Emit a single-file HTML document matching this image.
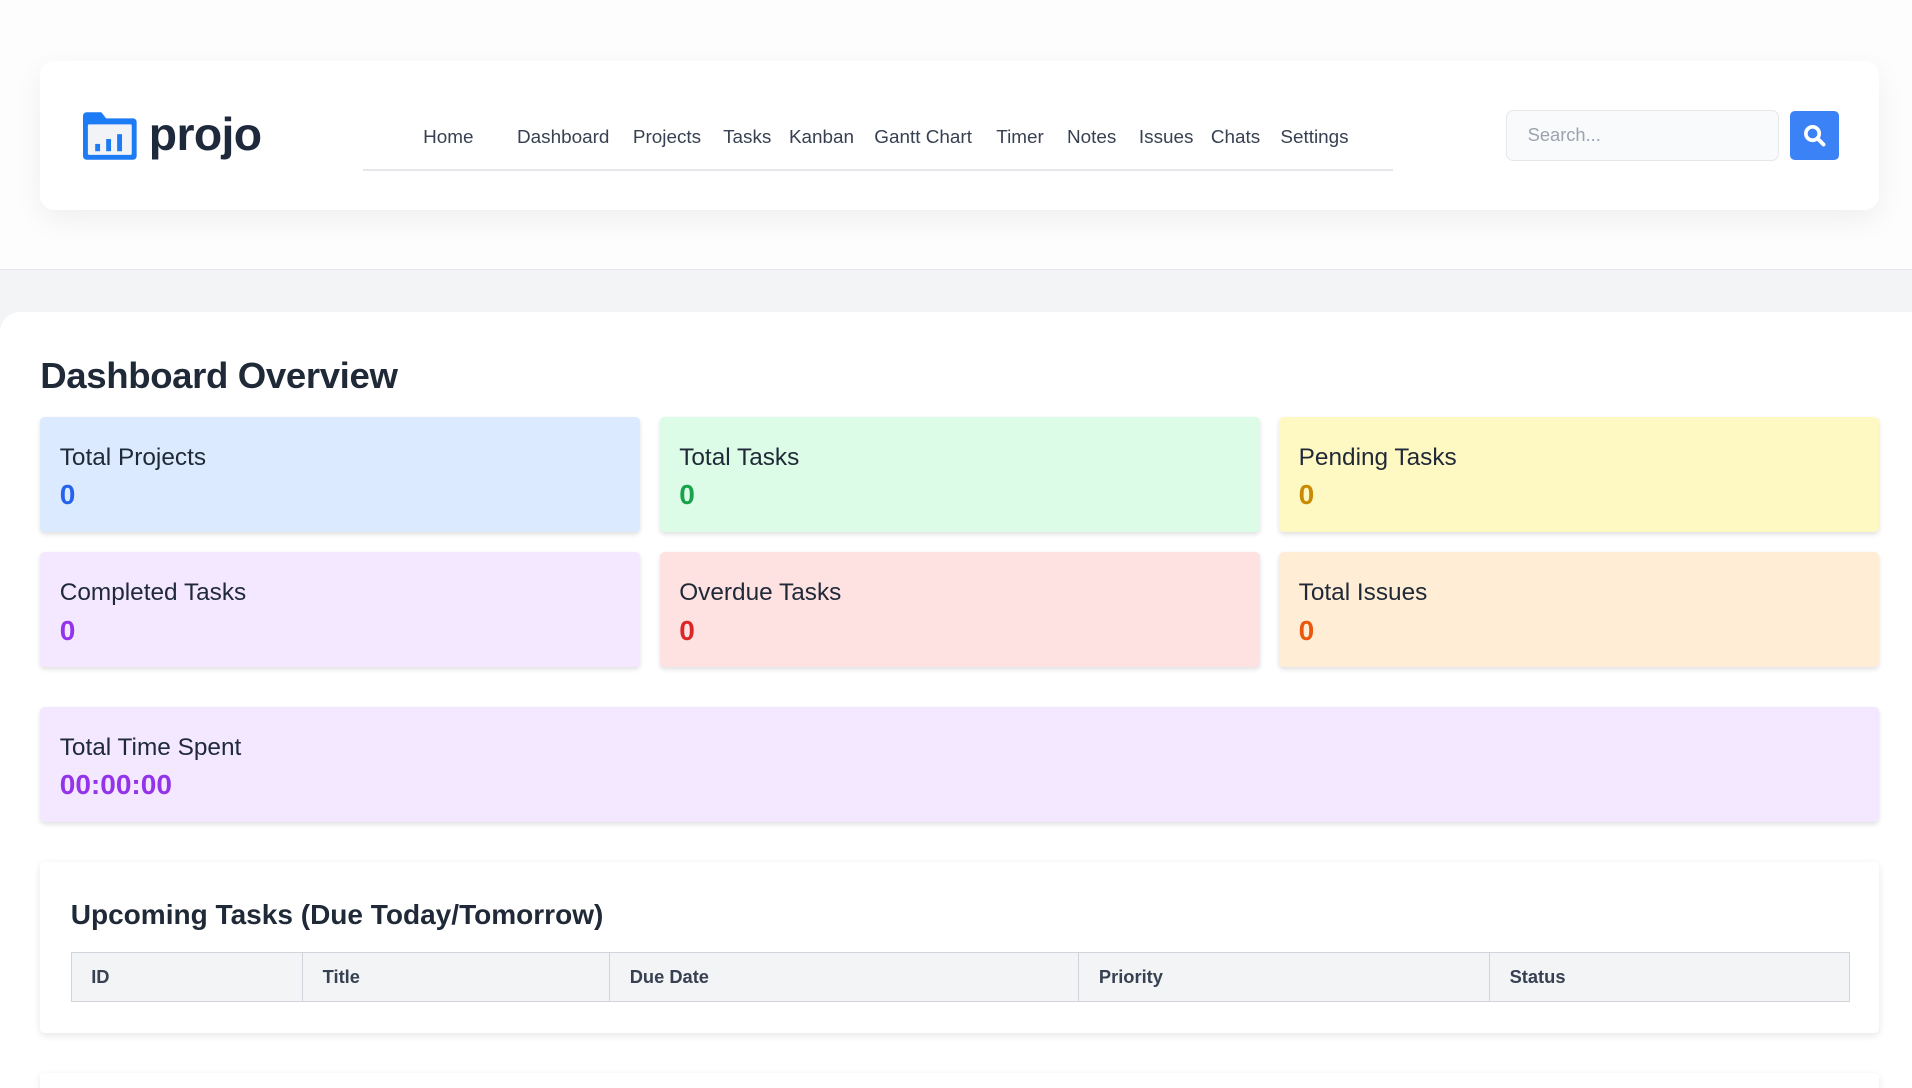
<!DOCTYPE html>
<html><head><meta charset="utf-8">
<style>
html{zoom:1.2194;overflow:hidden;height:892px}
body{margin:0;width:1568px;height:892px;overflow:hidden;background:#f3f4f6;font-family:"Liberation Sans",Arial,sans-serif;color:#1f2937;position:relative}
.top{position:absolute;left:0;top:0;width:1568px;height:221px;background:#fdfdfd;border-bottom:1px solid #e5e7eb}
.hdr{position:absolute;left:33px;top:50px;width:1508px;height:122px;background:#fff;border-radius:12px;box-shadow:0 8px 24px rgba(0,0,0,.06)}
.logo{position:absolute;left:35px;top:41px}
.brand{position:absolute;left:89px;top:38px;font-size:38px;font-weight:bold;color:#1e293b;letter-spacing:-0.5px}
.nav{position:absolute;left:265px;top:48px;width:844px;height:41px;border-bottom:2px solid #e5e7eb;font-size:15.5px;color:#374151}
.nav span{position:absolute;top:6px;white-space:nowrap}
.search{position:absolute;left:1202px;top:40px;background:#f9fafb;border:1px solid #e5e7eb;border-radius:6px;color:#9ca3af;font-size:15px;line-height:40px;padding-left:17px;box-sizing:border-box;width:224px;height:42px}
.btn{position:absolute;left:1435px;top:41px;width:40px;height:40px;background:#3b82f6;border-radius:4px}
.main{position:absolute;left:0;top:256px;width:1568px;height:636px;background:#fff;border-radius:16px 0 0 0;overflow:hidden}
h1{position:absolute;left:33px;top:35px;margin:0;font-size:30px;font-weight:bold;color:#1f2937;letter-spacing:-0.3px}
.c{position:absolute;width:492px;height:94px;border-radius:4px;box-shadow:0 2px 4px rgba(0,0,0,.12)}
.c .l{position:absolute;left:16px;top:22px;font-size:20px;color:#1f2937}
.c .v{position:absolute;left:16px;top:51px;font-size:23px;font-weight:bold}
.tbl{position:absolute;left:33px;top:451px;width:1508px;height:140px;background:#fff;border-radius:4px;box-shadow:0 2px 6px rgba(0,0,0,.1)}
.tbl h2{position:absolute;left:25px;top:30px;margin:0;font-size:23px;font-weight:bold;color:#1f2937}
table{position:absolute;left:25px;top:74px;border-collapse:collapse;width:1459px}
th{background:#f3f4f6;border:1px solid #d1d5db;height:39px;text-align:left;padding:0 16px;font-size:15px;color:#374151}
</style></head><body>
<div class="top">
 <div class="hdr">
  <svg class="logo" width="44" height="40" viewBox="0 0 44 40"><path d="M0 4a3 3 0 0 1 3-3h12l4 5h22a3 3 0 0 1 3 3v28a3 3 0 0 1-3 3H3a3 3 0 0 1-3-3z" fill="#1d7bf5"/><rect x="4" y="11" width="36" height="25" rx="1" fill="#f1f3f6"/><rect x="10" y="27" width="4" height="6" fill="#1d7bf5"/><rect x="19" y="23" width="4" height="10" fill="#1d7bf5"/><rect x="28" y="19" width="4" height="14" fill="#1d7bf5"/></svg>
  <div class="brand">projo</div>
  <div class="nav">
   <span style="left:49px">Home</span><span style="left:126px">Dashboard</span><span style="left:221px">Projects</span><span style="left:295px">Tasks</span><span style="left:349px">Kanban</span><span style="left:419px">Gantt Chart</span><span style="left:519px">Timer</span><span style="left:577px">Notes</span><span style="left:636px">Issues</span><span style="left:695px">Chats</span><span style="left:752px">Settings</span>
  </div>
  <div class="search">Search...</div>
  <div class="btn"><svg width="40" height="40" viewBox="0 0 40 40"><circle cx="18.5" cy="18.5" r="5.5" fill="none" stroke="#fff" stroke-width="3"/><path d="M22.5 22.5l5 5" stroke="#fff" stroke-width="3.2" stroke-linecap="round"/></svg></div>
 </div>
</div>
<div class="main">
 <h1>Dashboard Overview</h1>
 <div class="c" style="left:33px;top:86px;background:#dbeafe"><div class="l">Total Projects</div><div class="v" style="color:#2563eb">0</div></div>
 <div class="c" style="left:541px;top:86px;background:#dcfce7"><div class="l">Total Tasks</div><div class="v" style="color:#16a34a">0</div></div>
 <div class="c" style="left:1049px;top:86px;background:#fef9c3"><div class="l">Pending Tasks</div><div class="v" style="color:#ca8a04">0</div></div>
 <div class="c" style="left:33px;top:197px;background:#f3e8ff"><div class="l">Completed Tasks</div><div class="v" style="color:#9333ea">0</div></div>
 <div class="c" style="left:541px;top:197px;background:#fee2e2"><div class="l">Overdue Tasks</div><div class="v" style="color:#dc2626">0</div></div>
 <div class="c" style="left:1049px;top:197px;background:#ffedd5"><div class="l">Total Issues</div><div class="v" style="color:#ea580c">0</div></div>
 <div class="c" style="left:33px;top:324px;width:1508px;background:#f3e8ff"><div class="l">Total Time Spent</div><div class="v" style="color:#9333ea">00:00:00</div></div>
 <div class="tbl">
  <h2>Upcoming Tasks (Due Today/Tomorrow)</h2>
  <table><tr><th style="width:157px">ID</th><th style="width:219px">Title</th><th style="width:352px">Due Date</th><th style="width:304px">Priority</th><th>Status</th></tr></table>
 </div>
 <div class="tbl" style="top:624px;height:12px;border-radius:4px 4px 0 0"></div>
</div>
</body></html>
